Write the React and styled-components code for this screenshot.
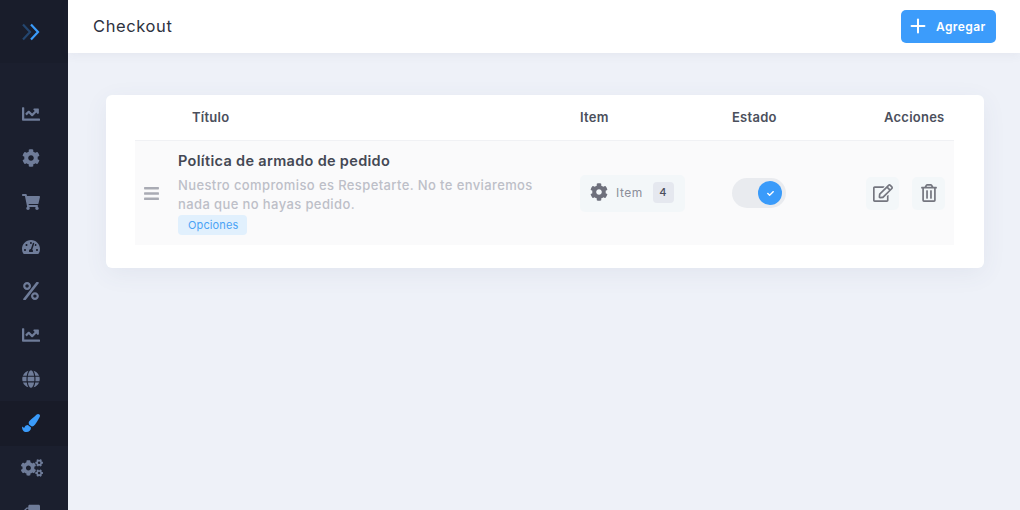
import styled, { createGlobalStyle } from "styled-components";
import { Plus } from "lucide-react";
import {
  FaChartLine, FaCog, FaShoppingCart, FaTachometerAlt, FaPercent, FaGlobe,
  FaPaintBrush, FaCogs, FaTruck, FaRegEdit, FaRegTrashAlt, FaCheck, FaBars,
} from "react-icons/fa";

const GlobalStyle = createGlobalStyle`
  html, body { margin: 0; padding: 0; height: 100%; overflow: hidden; }
  body { font-family: Inter, "Liberation Sans", sans-serif; background: #eef1f8; }
`;

const Page = styled.div`
  display: flex;
  width: 1020px;
  height: 510px;
  overflow: hidden;
`;
const Sidebar = styled.aside`
  width: 68px;
  flex: none;
  background: #1b1f2e;
  display: flex;
  flex-direction: column;
  overflow: hidden;
`;
const Logo = styled.div`
  height: 63px;
  flex: none;
  background: #191d2b;
  display: flex;
  align-items: center;
  justify-content: center;
  padding-right: 6px;
`;
const NavList = styled.nav`
  display: flex;
  flex-direction: column;
  padding-top: 29px;
`;
const NavItem = styled.div`
  height: 44.2px;
  flex: none;
  display: flex;
  align-items: center;
  justify-content: center;
  padding-right: 6px;
  color: ${({ $active }) => ($active ? "#3a9bfa" : "#6f7c99")};
  background: ${({ $active }) => ($active ? "#181b28" : "transparent")};
  font-size: 18px;
`;
const FlippedTruck = styled(FaTruck)`
  transform: scaleX(-1);
`;
const WideCogs = styled(FaCogs)`
  font-size: 22px;
  margin-left: 2px;
`;
const Main = styled.main`
  flex: 1;
  display: flex;
  flex-direction: column;
  min-width: 0;
`;
const Header = styled.header`
  height: 53px;
  flex: none;
  background: #fff;
  box-shadow: 0 2px 10px rgba(60, 70, 100, 0.06);
  display: flex;
  align-items: center;
  justify-content: space-between;
  padding: 0 24px 0 25px;
`;
const PageTitle = styled.h1`
  margin: 0 0 1px;
  font-size: 16.5px;
  font-weight: 400;
  color: #2e3240;
  letter-spacing: 0.6px;
`;
const AddButton = styled.button`
  width: 95px;
  height: 33px;
  border: 0;
  border-radius: 5px;
  background: #3c9cfb;
  color: #fff;
  font: 600 12px Inter, sans-serif;
  letter-spacing: 0.4px;
  display: flex;
  align-items: center;
  gap: 7px;
  padding: 0 0 0 6px;
  margin-bottom: 1px;
`;
const Content = styled.div`
  padding: 42px 36px 0 38px;
`;
const Card = styled.section`
  height: 173px;
  box-sizing: border-box;
  background: #fff;
  border-radius: 6px;
  box-shadow: 0 6px 24px rgba(70, 85, 130, 0.07);
  padding: 0 30px 0 29px;
`;
const columns = "43px 402px 152px 134px 88px";
const HeadRow = styled.div`
  display: grid;
  grid-template-columns: ${columns};
  height: 45px;
  align-items: center;
  border-bottom: 1px solid #f0f1f4;
  font-size: 13px;
  font-weight: 600;
  color: #4b4f5c;
  letter-spacing: 0.25px;
`;
const HeadCell = styled.div`
  grid-column: ${({ $col }) => $col};
  padding-left: ${({ $indent }) => $indent || 0}px;
  margin-bottom: 1px;
`;
const Row = styled.div`
  display: grid;
  grid-template-columns: ${columns};
  height: 104px;
  align-items: center;
  background: #fafafb;
`;
const Handle = styled.div`
  display: flex;
  justify-content: center;
  color: #a9abb4;
  font-size: 17px;
  padding-right: 11px;
`;
const TitleCell = styled.div`
  display: flex;
  flex-direction: column;
  align-items: flex-start;
  margin-bottom: 1px;
`;
const RowTitle = styled.div`
  font-size: 14.5px;
  line-height: 20px;
  font-weight: 600;
  color: #444854;
  letter-spacing: 0.32px;
  margin-bottom: 5px;
`;
const Description = styled.div`
  width: 370px;
  font-size: 13px;
  line-height: 19px;
  font-weight: 500;
  color: #bdbfc8;
  letter-spacing: 0.39px;
`;
const Tag = styled.span`
  margin-top: 1px;
  height: 20px;
  padding: 0 9px 0 10px;
  display: flex;
  align-items: center;
  background: #e1f0fd;
  color: #4ba3f5;
  border-radius: 4px;
  font-size: 11px;
  letter-spacing: 0.12px;
`;
const ItemChip = styled.div`
  width: 105px;
  height: 37px;
  box-sizing: border-box;
  background: #f3f7f9;
  border-radius: 5px;
  display: flex;
  align-items: center;
  padding: 0 0 2px 10px;
  color: #8b8e99;
  font-size: 12px;
  letter-spacing: 0.5px;
`;
const ItemIcon = styled(FaCog)`
  font-size: 18px;
  color: #6e707c;
  margin-right: 8px;
`;
const Count = styled.span`
  width: 21px;
  height: 21px;
  margin-left: 10px;
  background: #e5e8ef;
  border-radius: 4px;
  display: flex;
  align-items: center;
  justify-content: center;
  font-size: 11px;
  font-weight: 500;
  color: #4b4f5c;
`;
const Toggle = styled.div`
  width: 54px;
  height: 30px;
  border-radius: 15px;
  background: #e9ebef;
  position: relative;
`;
const Knob = styled.span`
  position: absolute;
  right: 4px;
  top: 3px;
  width: 24px;
  height: 24px;
  border-radius: 50%;
  background: #3a9bfa;
  color: #fff;
  font-size: 7px;
  display: flex;
  align-items: center;
  justify-content: center;
`;
const Actions = styled.div`
  display: flex;
  justify-content: flex-end;
  gap: 13px;
  padding-right: 9px;
`;
const ActionButton = styled.button`
  width: 33px;
  height: 33px;
  border: 0;
  padding: 0;
  border-radius: 5px;
  background: #f3f7f9;
  color: #74767f;
  font-size: ${({ $size }) => $size}px;
  display: flex;
  align-items: center;
  justify-content: center;
`;

const navIcons = [
  FaChartLine, FaCog, FaShoppingCart, FaTachometerAlt, FaPercent,
  FaChartLine, FaGlobe, FaPaintBrush, WideCogs, FlippedTruck,
];

export default function App() {
  return (
    <Page>
      <GlobalStyle />
      <Sidebar>
        <Logo>
          <svg width="20" height="18" viewBox="0 0 20 18" fill="none" strokeWidth="2.2">
            <path d="M2 1.5 9 9l-7 7.5" stroke="#24466f" />
            <path d="M10 1.5 17 9l-7 7.5" stroke="#3a9bfa" />
          </svg>
        </Logo>
        <NavList>
          {navIcons.map((Icon, i) => (
            <NavItem key={i} $active={Icon === FaPaintBrush}>
              <Icon />
            </NavItem>
          ))}
        </NavList>
      </Sidebar>
      <Main>
        <Header>
          <PageTitle>Checkout</PageTitle>
          <AddButton>
            <Plus size={22} strokeWidth={2.2} />
            Agregar
          </AddButton>
        </Header>
        <Content>
          <Card>
            <HeadRow>
              <HeadCell $col={2} $indent={14}>Título</HeadCell>
              <HeadCell $col={3}>Item</HeadCell>
              <HeadCell $col={4}>Estado</HeadCell>
              <HeadCell $col={5} $indent={18}>Acciones</HeadCell>
            </HeadRow>
            <Row>
              <Handle><FaBars /></Handle>
              <TitleCell>
                <RowTitle>Política de armado de pedido</RowTitle>
                <Description>
                  Nuestro compromiso es Respetarte. No te enviaremos nada que no hayas pedido.
                </Description>
                <Tag>Opciones</Tag>
              </TitleCell>
              <ItemChip>
                <ItemIcon />
                Item
                <Count>4</Count>
              </ItemChip>
              <Toggle>
                <Knob><FaCheck /></Knob>
              </Toggle>
              <Actions>
                <ActionButton $size={20}><FaRegEdit /></ActionButton>
                <ActionButton $size={18}><FaRegTrashAlt /></ActionButton>
              </Actions>
            </Row>
          </Card>
        </Content>
      </Main>
    </Page>
  );
}
